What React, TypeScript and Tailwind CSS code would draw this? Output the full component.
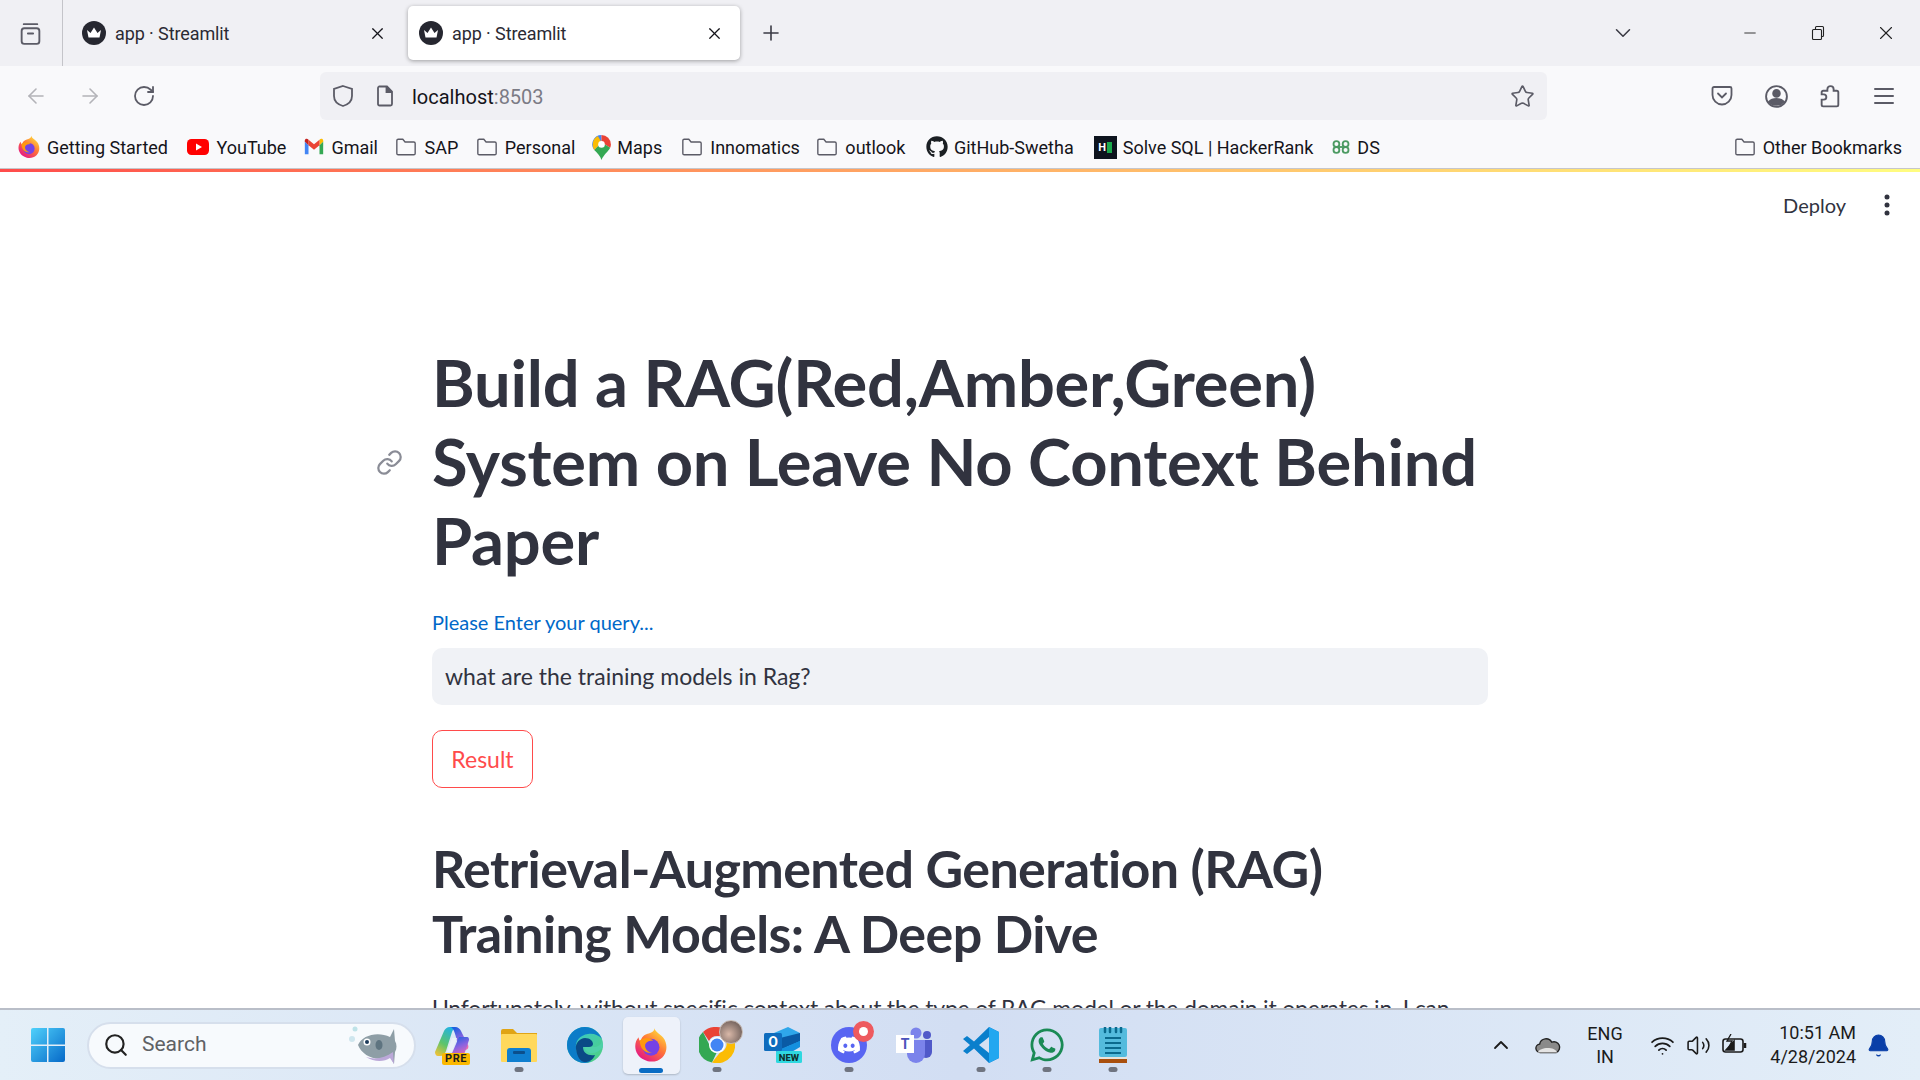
import React from 'react';
import { FaGithub, FaDiscord, FaWhatsapp } from 'react-icons/fa';
import { ArrowLeft, ArrowRight, RotateCw, Star, Plus, X, ChevronDown, ChevronUp, Minus, Search, Link, Wifi, Volume2, Bell } from 'lucide-react';

const Crown = () => (
  <svg viewBox="0 0 24 24" className="w-[24px] h-[24px] shrink-0">
    <circle cx="12" cy="12" r="12" fill="#262730" />
    <path d="M5 9l3.5 3L12 6.5 15.500 12 19 9l-1.500 7.500h-11z" fill="#fff" />
  </svg>
);

const Tab = ({ active }: { active?: boolean }) => (
  <div className={active ? 'w-[332px] h-[54px] bg-white rounded-[5px] shadow-[0_1px_4px_rgba(0,0,0,0.35)] flex items-center pl-[11px] pr-[16px]' : 'w-[332px] h-[54px] flex items-center pl-[11px] pr-[16px]'}>
    <Crown />
    <span className="ml-[9px] text-[18px] tracking-[-0.1px] text-[#2b2a33] flex-1">app · Streamlit</span>
    <X size={19} strokeWidth={1.5} className="text-[#15141a]" />
  </div>
);

const FolderIcon = () => (
  <svg viewBox="0 0 24 24" className="w-[24px] h-[22px] shrink-0" fill="none" stroke="#5b5b66" strokeWidth="1.500">
    <path d="M2 19V5a1.500 1.500 0 0 1 1.500-1.500h5L11 6.500h9.500A1.500 1.500 0 0 1 22 8v11a1.500 1.500 0 0 1-1.500 1.500h-17A1.500 1.500 0 0 1 2 19z" />
  </svg>
);

const FirefoxIcon = ({ size = 24 }: { size?: number }) => (
  <svg viewBox="0 0 32 32" width={size} height={size} className="shrink-0">
    <defs>
      <linearGradient id="ffa" x1="0.8" y1="0.1" x2="0.2" y2="0.95">
        <stop offset="0" stopColor="#ffd43a" />
        <stop offset="0.45" stopColor="#ff7139" />
        <stop offset="1" stopColor="#e31587" />
      </linearGradient>
    </defs>
    <path d="M19 1c1 4 6 5 9 10 3 6 2 12-2 16-4 4-11 5-16 2C5 27 2 22 2 17c0-3 1-6 3-8 0 2 1 3 2 4 0-4 3-6 6-7 3-1 6-2 6-5z" fill="url(#ffa)" />
    <circle cx="16" cy="18" r="7.500" fill="#7542e5" />
    <path d="M6 12c3-3 9-3 12 0-3 0-6 1-7 3-1 3 1 7 6 8-5 1-11-3-11-11z" fill="#ff980e" />
  </svg>
);

const YouTubeIcon = () => (
  <svg viewBox="0 0 24 24" className="w-[24px] h-[24px] shrink-0">
    <rect x="1" y="4" width="22" height="16" rx="4.500" fill="#ff0000" />
    <path d="M10 8.500v7l6-3.500z" fill="#fff" />
  </svg>
);

const GmailIcon = () => (
  <svg viewBox="0 0 24 24" className="w-[22px] h-[22px] shrink-0">
    <path d="M2 6v14h4V10z" fill="#4285f4" />
    <path d="M18 10v10h4V6z" fill="#34a853" />
    <path d="M18 4v6l4-4V5c0-2-2.500-2.500-4-1z" fill="#fbbc04" />
    <path d="M6 10V4l6 5 6-5v6l-6 5z" fill="#ea4335" />
    <path d="M2 5v1l4 4V4C4.500 2.500 2 3 2 5z" fill="#c5221f" />
  </svg>
);

const MapsIcon = () => (
  <svg viewBox="0 0 18 24" className="w-[19px] h-[25px] shrink-0">
    <path d="M9 0a9 9 0 0 0-7 14.500L9 7z" fill="#4285f4" />
    <path d="M9 0a9 9 0 0 1 9 9c0 1.200-.2 2.300-.7 3.300L9 7z" fill="#ea4335" />
    <path d="M2 14.500L9 7l8.300 5.300C15.500 16 11 19 9 24c-1-3.500-4-6.500-7-9.500z" fill="#34a853" />
    <path d="M2 14.500L9 7 5.500 1C1 3 -1 9 2 14.500z" fill="#fbbc04" />
    <circle cx="9" cy="9" r="3.200" fill="#fff" />
  </svg>
);

const HackerRankIcon = () => (
  <span className="w-[23px] h-[23px] bg-[#0e141e] shrink-0 flex items-center justify-center gap-[1px]">
    <span className="text-white text-[11px] font-bold leading-none">H</span>
    <span className="w-[5px] h-[11px] bg-[#1ba94c]" />
  </span>
);

const DsIcon = () => (
  <svg viewBox="0 0 24 24" className="w-[20px] h-[20px] shrink-0" fill="none" stroke="#4c9a62" strokeWidth="2.200">
    <circle cx="6.500" cy="8.500" r="3.500" />
    <circle cx="17.500" cy="8.500" r="3.500" />
    <circle cx="6.500" cy="15.500" r="3.500" />
    <circle cx="17.500" cy="15.500" r="3.500" />
    <path d="M6 12h12" />
  </svg>
);

const Bookmark = ({ icon, label, className }: { icon: React.ReactNode; label: string; className?: string }) => (
  <div className={`flex items-center gap-[6px] ${className ?? ''}`}>
    {icon}
    <span className="text-[18px] text-[#15141a] whitespace-nowrap">{label}</span>
  </div>
);

const Dot = () => <span className="absolute left-1/2 -translate-x-1/2 bottom-[2px] w-[9px] h-[5px] rounded-full bg-[#6f7480]" />;

const TaskIcon = ({ children, dot, active }: { children: React.ReactNode; dot?: boolean; active?: boolean }) => (
  <div className={active ? 'relative w-[57px] h-[57px] mx-[4.500px] rounded-[5px] bg-[#eef2fa] shadow-[0_1px_2px_rgba(0,0,0,0.2)] flex items-center justify-center' : 'relative w-[57px] h-[57px] mx-[4.500px] flex items-center justify-center'}>
    {children}
    {dot && <Dot />}
    {active && <span className="absolute left-1/2 -translate-x-1/2 bottom-[1px] w-[24px] h-[5px] rounded-full bg-[#0a6cc4]" />}
  </div>
);

const WinLogo = () => (
  <svg viewBox="0 0 36 36" className="w-[36px] h-[36px]">
    <defs>
      <linearGradient id="win" x1="0" y1="0" x2="1" y2="1">
        <stop offset="0" stopColor="#4fd1fb" />
        <stop offset="1" stopColor="#0669c8" />
      </linearGradient>
    </defs>
    <path d="M1 3a2 2 0 0 1 2-2h14v16.500H1zM18.500 1H33a2 2 0 0 1 2 2v14.500H18.500zM1 19h16v16H3a2 2 0 0 1-2-2zM18.500 19H35v14a2 2 0 0 1-2 2H18.500z" fill="url(#win)" />
  </svg>
);

const Sunfish = () => (
  <svg viewBox="0 0 56 44" className="w-[56px] h-[44px] shrink-0">
    <circle cx="6" cy="16" r="3" fill="#cfe6ee" />
    <circle cx="9" cy="6" r="2.500" fill="#bfe3e8" />
    <path d="M12 22c4-10 20-14 32-8l4-8 1 12c2 3 2 8 0 11l-1 12-4-8c-12 7-28 0-32-11z" fill="#8e9ea6" />
    <path d="M20 34c8 5 18 5 24 1l4 6-1-12c-8 6-18 8-27 5z" fill="#bba8d8" />
    <circle cx="21" cy="19" r="3.500" fill="#fff" />
    <circle cx="21" cy="19" r="2" fill="#1c3a5a" />
    <ellipse cx="33" cy="22" rx="3.500" ry="5" fill="#5e7480" />
  </svg>
);

const Copilot = () => (
  <div className="relative w-[36px] h-[36px]">
    <svg viewBox="0 0 34 30" className="absolute left-0 top-0 w-[34px] h-[30px]">
      <defs>
        <linearGradient id="cpa" x1="0.7" y1="0" x2="0.2" y2="1">
          <stop offset="0" stopColor="#1fb2e8" />
          <stop offset="0.6" stopColor="#5ec46a" />
          <stop offset="1" stopColor="#e8c23a" />
        </linearGradient>
        <linearGradient id="cpb" x1="0.3" y1="0" x2="0.8" y2="1">
          <stop offset="0" stopColor="#1b5fe0" />
          <stop offset="0.5" stopColor="#8a63e0" />
          <stop offset="1" stopColor="#f06cb0" />
        </linearGradient>
      </defs>
      <path d="M9 4c1-2 3-4 6-4h8c-3 0-5 2-6 5l-6 19c-1 3-3 5-6 5H3c-2 0-3-2-3-4z" fill="url(#cpa)" />
      <path d="M15 0h5c3 0 5 2 6 4l7 14c1 2 0 5-3 5h-6c-1-6-3-14-5-19-1-2-2-4-4-4z" fill="url(#cpb)" />
      <path d="M24 10h8c2 0 2 2 2 3l-4 12c-1 3-3 4-6 4H12c3 0 5-2 6-5z" fill="url(#cpb)" />
      <path d="M17 11h5l-5 14h-5z" fill="#e9f0f8" />
    </svg>
    <span className="absolute left-[7px] bottom-[-2px] w-[28px] h-[12px] bg-[#fbb800] rounded-[2px] text-[11px] leading-[12px] font-bold text-center text-[#1d1d1d] tracking-[0.5px]">PRE</span>
  </div>
);

const Explorer = () => (
  <svg viewBox="0 0 36 36" className="w-[36px] h-[36px]">
    <path d="M0 4a2 2 0 0 1 2-2h10l4 4h20v6H0z" fill="#e0a415" />
    <rect x="0" y="7" width="36" height="28" rx="1" fill="#ffd85c" />
    <path d="M6 35V24a3 3 0 0 1 3-3h18a3 3 0 0 1 3 3v11z" fill="#0f7fd0" />
    <rect x="12" y="24" width="12" height="3" rx="1" fill="#0b4f8c" />
  </svg>
);

const Edge = () => (
  <svg viewBox="0 0 36 36" className="w-[36px] h-[36px]">
    <defs>
      <linearGradient id="ega" x1="0" y1="0" x2="1" y2="1">
        <stop offset="0" stopColor="#32c5d8" />
        <stop offset="1" stopColor="#52d17c" />
      </linearGradient>
    </defs>
    <circle cx="18" cy="18" r="18" fill="url(#ega)" />
    <path d="M0 18C0 8 8 0 18 0c8 0 14 5 17 12-3-4-9-6-14-5C13 8 8 14 9 21c1 8 7 14 15 13-2 1-4 2-6 2C8 36 0 28 0 18z" fill="#0c7cc8" />
    <path d="M9 22c-1-6 4-11 9-11 5 0 8 3 8 6 0 2-2 3-4 3h-6c0 6 5 9 12 8-2 5-6 7-10 7-5 0-8-6-9-13z" fill="#0a4a86" />
    <path d="M17 20h9c5 0 8-2 9-6 1 2 1 4 1 6-3 4-9 7-13 6-3-1-5-3-6-6z" fill="#4fd0a8" />
  </svg>
);

const Chrome = () => (
  <div className="relative w-[36px] h-[36px]">
    <svg viewBox="0 0 36 36" className="w-[36px] h-[36px]">
      <path d="M18 0a18 18 0 0 1 15.600 9H18a9 9 0 0 0-8 5L4 5a18 18 0 0 1 14-5z" fill="#ea4335" />
      <path d="M4 5l6.500 13a9 9 0 0 0 7 8L13 35.500A18 18 0 0 1 4 5z" fill="#34a853" />
      <path d="M33.600 9A18 18 0 0 1 13 35.500l8-10a9 9 0 0 0 4-15z" fill="#fbbc04" />
      <circle cx="18" cy="18" r="8" fill="#fff" />
      <circle cx="18" cy="18" r="6.500" fill="#4285f4" />
    </svg>
    <span className="absolute left-[20px] top-[-7px] w-[24px] h-[24px] rounded-full bg-[radial-gradient(circle_at_40%_60%,#d9b8a8,#7c6a64_70%,#b9aeb0)] border border-[#c8bdb6]" />
  </div>
);

const Outlook = () => (
  <svg viewBox="0 0 38 36" className="w-[38px] h-[36px]">
    <path d="M10 6l14-6 12 6v12H10z" fill="#2fa7ea" />
    <path d="M12 12l24-6v8L14 24z" fill="#0a5aa5" />
    <path d="M12 24l24-10v6l-20 12z" fill="#1490df" />
    <rect x="0" y="6" width="18" height="18" rx="1.500" fill="#0f6cbd" />
    <text x="9" y="20" textAnchor="middle" fontSize="14" fontWeight="700" fill="#fff" fontFamily="Roboto, sans-serif">O</text>
    <rect x="12" y="24" width="26" height="12" rx="1.500" fill="#2fd8e0" />
    <text x="25" y="34" textAnchor="middle" fontSize="9.500" fontWeight="800" fill="#10302f" fontFamily="Roboto, sans-serif">NEW</text>
  </svg>
);

const Discord = () => (
  <div className="relative w-[36px] h-[36px] rounded-full bg-[#5865f2] flex items-center justify-center">
    <FaDiscord size={24} color="#fff" />
    <span className="absolute left-[22px] top-[-6px] w-[21px] h-[21px] rounded-full bg-[#ee5a5f] flex items-center justify-center">
      <span className="w-[9px] h-[9px] rounded-full bg-white" />
    </span>
  </div>
);

const Teams = () => (
  <svg viewBox="0 0 38 36" className="w-[38px] h-[36px]">
    <circle cx="20" cy="6" r="5.500" fill="#7b83eb" />
    <circle cx="31" cy="8" r="4" fill="#5059c9" />
    <path d="M24 13h12v12a6 6 0 0 1-12 0z" fill="#5059c9" />
    <path d="M11 13h18v14a9 9 0 0 1-18 0z" fill="#7b83eb" />
    <rect x="0" y="8" width="18" height="18" fill="#fff" />
    <text x="9" y="22" textAnchor="middle" fontSize="14" fontWeight="700" fill="#4b53bc" fontFamily="Roboto, sans-serif">T</text>
  </svg>
);

const VsCode = () => (
  <svg viewBox="0 0 36 36" className="w-[36px] h-[36px]">
    <path d="M26 0l10 5v26l-10 5-15-14.500L4 27l-4-3 7-6-7-6 4-3 7 5.500z" fill="#0a7fcc" />
    <path d="M26 0l10 5v26l-10 5V0z" fill="#22a7f0" />
    <path d="M26 10l-10 8 10 8z" fill="#d5e0f2" />
  </svg>
);

const Notepad = () => (
  <svg viewBox="0 0 28 36" className="w-[28px] h-[36px]">
    <rect x="0" y="1" width="28" height="29" rx="2" fill="#54bbdd" />
    <rect x="0" y="30" width="28" height="2" fill="#e8e4dc" />
    <rect x="0" y="32" width="28" height="4" fill="#a9500f" />
    <path d="M6 0v5M11 0v5M17 0v5M22 0v5" stroke="#0b6a8e" strokeWidth="2.500" strokeLinecap="round" />
    <path d="M6 11h16M6 16h16M6 21h16M6 26h16" stroke="#0b6a8e" strokeWidth="1.800" />
  </svg>
);

export default function App() {
  return (
    <div className="w-[1920px] h-[1080px] flex flex-col overflow-hidden bg-white font-['Roboto',sans-serif]">
      {/* tab strip */}
      <div className="h-[66px] bg-[#f0f0f4] flex items-center shrink-0">
        <div className="w-[63px] h-full border-r border-[#c4c4c9] flex items-center justify-center pr-[2px]">
          <svg viewBox="0 0 24 24" className="w-[25px] h-[25px]" fill="none" stroke="#5b5b66" strokeWidth="1.800">
            <rect x="3.500" y="7" width="17" height="15" rx="2.500" />
            <path d="M5.500 3h13M9.500 12h5" strokeLinecap="round" />
          </svg>
        </div>
        <div className="ml-[8px]"><Tab /></div>
        <div className="ml-[5px]"><Tab active /></div>
        <Plus size={24} strokeWidth={1.6} className="ml-[19px] text-[#3a3a44]" />
        <ChevronDown size={26} strokeWidth={1.4} className="ml-[827px] text-[#3a3a44]" />
        <div className="ml-auto flex items-center">
          <div className="w-[68px] flex justify-center"><Minus size={18} strokeWidth={1.2} className="text-[#222]" /></div>
          <div className="w-[68px] flex justify-center">
            <svg viewBox="0 0 16 16" className="w-[16px] h-[16px]" fill="none" stroke="#222" strokeWidth="1.100">
              <rect x="2.500" y="4.500" width="9" height="10" rx="1" />
              <path d="M5.500 4.500V2.500a1 1 0 0 1 1-1h6a1 1 0 0 1 1 1v8a1 1 0 0 1-1 1h-1" />
            </svg>
          </div>
          <div className="w-[68px] flex justify-center"><X size={22} strokeWidth={1.2} className="text-[#222]" /></div>
        </div>
      </div>

      {/* nav toolbar */}
      <div className="h-[60px] bg-[#f9f9fb] flex items-center shrink-0">
        <ArrowLeft size={24} strokeWidth={1.6} className="ml-[24px] text-[#b3b3b8]" />
        <ArrowRight size={24} strokeWidth={1.6} className="ml-[30px] text-[#b3b3b8]" />
        <RotateCw size={24} strokeWidth={1.8} className="ml-[30px] text-[#5b5b66]" />
        <div className="ml-[164px] w-[1227px] h-[48px] rounded-[6px] bg-[#f0f0f4] flex items-center pl-[11px] pr-[12px]">
          <svg viewBox="0 0 24 24" className="w-[24px] h-[24px]" fill="none" stroke="#5b5b66" strokeWidth="1.800">
            <path d="M12 2l9 3v7c0 5-4 8.500-9 10-5-1.500-9-5-9-10V5z" />
          </svg>
          <svg viewBox="0 0 24 24" className="ml-[18px] w-[24px] h-[24px]" fill="none" stroke="#5b5b66" strokeWidth="1.800">
            <path d="M6 2.500h8l5 5V20a1.500 1.500 0 0 1-1.500 1.500h-11A1.500 1.500 0 0 1 5 20V4a1.500 1.500 0 0 1 1-1.500z" />
            <path d="M13.500 2.500V8H19" fill="#5b5b66" />
          </svg>
          <span className="ml-[15px] pt-[2px] text-[20px] text-[#15141a]">localhost<span className="text-[#7b7b85]">:8503</span></span>
          <Star size={25} strokeWidth={1.6} className="ml-auto text-[#5b5b66]" />
        </div>
        <div className="flex items-center ml-[163px]">
          <svg viewBox="0 0 24 24" className="w-[24px] h-[24px]" fill="none" stroke="#5b5b66" strokeWidth="1.800">
            <path d="M4 3h16a1.500 1.500 0 0 1 1.500 1.500V11a9.500 9.500 0 0 1-19 0V4.500A1.500 1.500 0 0 1 4 3z" />
            <path d="M8 9.500l4 4 4-4" strokeLinecap="round" />
          </svg>
          <svg viewBox="0 0 24 24" className="ml-[30px] w-[25px] h-[25px]" fill="none" stroke="#5b5b66" strokeWidth="1.800">
            <circle cx="12" cy="12" r="10" />
            <circle cx="12" cy="9" r="3.200" fill="#5b5b66" />
            <path d="M5 17c3-3.500 11-3.500 14 0-3 4-11 4-14 0z" fill="#5b5b66" />
          </svg>
          <svg viewBox="0 0 24 24" className="ml-[29px] w-[25px] h-[25px]" fill="none" stroke="#5b5b66" strokeWidth="1.800">
            <path d="M13 21.500H5a1.500 1.500 0 0 1-1.500-1.500v-5h2a2.500 2.500 0 0 0 0-5h-2V8A1.500 1.500 0 0 1 5 6.500h4V5a3 3 0 0 1 6 0v1.500h3A1.500 1.500 0 0 1 19.500 8v12a1.500 1.500 0 0 1-1.500 1.500z" />
          </svg>
          <svg viewBox="0 0 24 24" className="ml-[29px] w-[24px] h-[24px]" fill="none" stroke="#5b5b66" strokeWidth="2">
            <path d="M3 5h18M3 12h18M3 19h18" strokeLinecap="round" />
          </svg>
        </div>
      </div>

      {/* bookmarks */}
      <div className="h-[43px] bg-[#f9f9fb] border-b border-[#c6c6ca] flex items-center pl-[17px] pr-[18px] shrink-0">
        <Bookmark icon={<FirefoxIcon />} label="Getting Started" />
        <Bookmark className="ml-[18.500px]" icon={<YouTubeIcon />} label="YouTube" />
        <Bookmark className="ml-[17px]" icon={<GmailIcon />} label="Gmail" />
        <Bookmark className="ml-[16.500px]" icon={<FolderIcon />} label="SAP" />
        <Bookmark className="ml-[16.500px]" icon={<FolderIcon />} label="Personal" />
        <Bookmark className="ml-[17px]" icon={<MapsIcon />} label="Maps" />
        <Bookmark className="ml-[18px]" icon={<FolderIcon />} label="Innomatics" />
        <Bookmark className="ml-[15.500px]" icon={<FolderIcon />} label="outlook" />
        <Bookmark className="ml-[20.500px]" icon={<FaGithub size={22} color="#1b1f23" className="shrink-0" />} label="GitHub-Swetha" />
        <Bookmark className="ml-[20px]" icon={<HackerRankIcon />} label="Solve SQL | HackerRank" />
        <Bookmark className="ml-[18px]" icon={<DsIcon />} label="DS" />
        <Bookmark className="ml-auto" icon={<FolderIcon />} label="Other Bookmarks" />
      </div>

      {/* streamlit decoration bar */}
      <div className="h-[3px] shrink-0 bg-gradient-to-r from-[#ff4b4b] to-[#fffd80]" />

      {/* page */}
      <div className="flex-1 overflow-hidden text-[#31333f] font-['Lato',sans-serif] [font-variant-ligatures:none]">
        <div className="h-[65px] flex items-center justify-end">
          <span className="text-[20px]">Deploy</span>
          <svg viewBox="0 0 8 24" className="ml-[37px] mr-[29px] w-[8px] h-[24px]" fill="#31333f">
            <circle cx="4" cy="4" r="2.500" />
            <circle cx="4" cy="12" r="2.500" />
            <circle cx="4" cy="20" r="2.500" />
          </svg>
        </div>
        <div className="w-[1056px] ml-[432px] pt-[106px]">
          <div className="relative">
            <Link size={27} strokeWidth={2} className="absolute left-[-56px] top-[106px] text-[#8a8c96]" />
            <h1 className="text-[65px] leading-[79px] font-bold tracking-[-0.2px]">Build a RAG(Red,Amber,Green) System on Leave No Context Behind Paper</h1>
          </div>
          <label className="block mt-[27px] text-[20px] leading-[30px] text-[#0068c9]">Please Enter your query...</label>
          <div className="mt-[11px] h-[57px] rounded-[10px] bg-[#f0f2f6] flex items-center pl-[13px] text-[23px]">what are the training models in Rag?</div>
          <button className="mt-[25px] w-[101px] h-[58px] rounded-[10px] border border-[#ff4b4b] text-[#ff4b4b] text-[23px] flex items-center justify-center">Result</button>
          <h2 className="mt-[48px] text-[52px] leading-[65px] font-bold tracking-[-0.6px]">Retrieval-Augmented Generation (RAG) Training Models: A Deep Dive</h2>
          <p className="mt-[23px] text-[23px] leading-[38px] tracking-[-0.2px]">Unfortunately, without specific context about the type of RAG model or the domain it operates in, I can</p>
        </div>
      </div>

      {/* windows taskbar */}
      <div className="h-[72px] shrink-0 border-t-2 border-[#b9bec8] bg-gradient-to-r from-[#e4eff8] via-[#d2def3] to-[#e3eef8] flex items-center">
        <div className="ml-[30px]"><WinLogo /></div>
        <div className="ml-[21px] w-[329px] h-[47px] rounded-full bg-[#f7fafd] border-2 border-[#d6dfec] flex items-center pl-[14px] pr-[12px]">
          <Search size={26} strokeWidth={2} className="text-[#222]" />
          <span className="ml-[13px] text-[21px] text-[#5f6165]">Search</span>
          <div className="ml-auto"><Sunfish /></div>
        </div>
        <div className="ml-[4px] flex items-center">
          <TaskIcon><Copilot /></TaskIcon>
          <TaskIcon dot><Explorer /></TaskIcon>
          <TaskIcon><Edge /></TaskIcon>
          <TaskIcon active><FirefoxIcon size={36} /></TaskIcon>
          <TaskIcon dot><Chrome /></TaskIcon>
          <TaskIcon><Outlook /></TaskIcon>
          <TaskIcon dot><Discord /></TaskIcon>
          <TaskIcon><Teams /></TaskIcon>
          <TaskIcon dot><VsCode /></TaskIcon>
          <TaskIcon dot><FaWhatsapp size={38} color="#1a8a55" /></TaskIcon>
          <TaskIcon dot><Notepad /></TaskIcon>
        </div>
        <div className="ml-auto flex items-center text-[#1b1b1b] font-['Roboto',sans-serif]">
          <ChevronUp size={24} strokeWidth={1.8} />
          <svg viewBox="0 0 28 20" className="ml-[22px] w-[26px] h-[20px]">
            <path d="M6 18a4.500 4.500 0 0 1-1-9 7 7 0 0 1 13-2 5.500 5.500 0 0 1 5 11z" fill="#8a8a8a" stroke="#222" strokeWidth="1.500" />
            <path d="M3 18c2-6 18-7 21 0z" fill="#e4e4e4" />
          </svg>
          <div className="ml-[20px] w-[48px] text-center text-[18px] leading-[23px]">ENG<br />IN</div>
          <Wifi size={25} strokeWidth={1.7} className="ml-[21px]" />
          <Volume2 size={25} strokeWidth={1.5} className="ml-[11px]" />
          <svg viewBox="0 0 26 22" className="ml-[11px] w-[26px] h-[22px]" fill="none" stroke="#1b1b1b" strokeWidth="1.600">
            <rect x="1" y="5" width="20" height="13" rx="2.500" />
            <path d="M23 9v5" strokeWidth="2.500" />
            <path d="M4 16l8-9v9z" fill="#1b1b1b" />
            <path d="M9 0L5 7h5l-3 6" strokeWidth="1.300" />
          </svg>
          <div className="ml-[8px] w-[100px] text-right text-[18px] leading-[24px]">10:51 AM<br />4/28/2024</div>
          <Bell size={25} fill="#0a3fa8" strokeWidth={1} className="ml-[10px] mr-[29px] text-[#0a3fa8]" />
        </div>
      </div>
    </div>
  );
}
